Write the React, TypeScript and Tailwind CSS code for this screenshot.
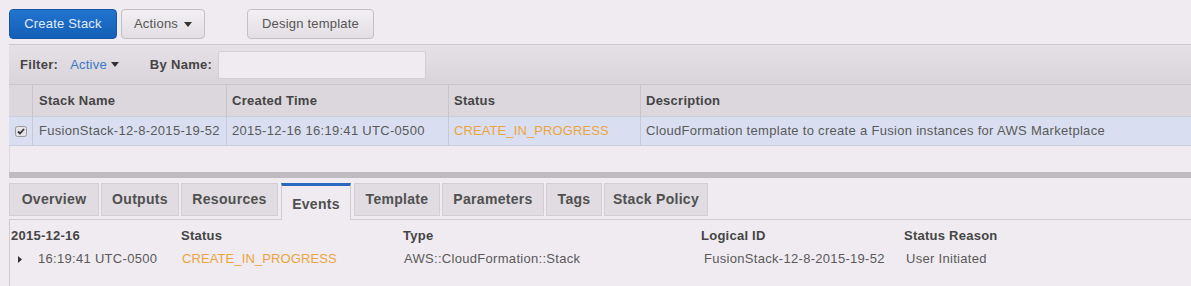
import React from "react";

const font = "font-['Liberation_Sans',Arial,Helvetica,sans-serif]";

function Caret({ className = "" }: { className?: string }) {
  return (
    <svg width="8" height="5" viewBox="0 0 8 5" className={className}>
      <path d="M0 0h8L4 5z" fill="currentColor" />
    </svg>
  );
}

const tabs = [
  { label: "Overview", w: "w-[90px]" },
  { label: "Outputs", w: "w-[78px]" },
  { label: "Resources", w: "w-[97px]" },
  { label: "Events", w: "w-[70px]", active: true },
  { label: "Template", w: "w-[86px]" },
  { label: "Parameters", w: "w-[102px]" },
  { label: "Tags", w: "w-[56px]" },
  { label: "Stack Policy", w: "w-[104px]" },
];

export default function App() {
  return (
    <div className={`h-[286px] w-[1191px] overflow-hidden bg-[#efebf0] pl-[9px] pt-[9px] ${font}`}>
      {/* toolbar */}
      <div className="flex h-[30px] items-stretch tracking-[0.2px]">
        <button className="w-[108px] rounded-[4px] border border-[#1558a8] bg-gradient-to-b from-[#2174cf] to-[#145fb7] text-[13px] text-[#e3ebf8]">
          Create Stack
        </button>
        <button className="ml-[4px] flex w-[84px] items-center justify-center gap-[6px] rounded-[4px] border border-[#c3bfc4] bg-gradient-to-b from-[#f3f0f4] to-[#e2dee3] text-[13px] text-[#555]">
          Actions <Caret className="text-[#333]" />
        </button>
        <button className="ml-[42px] w-[127px] rounded-[4px] border border-[#c3bfc4] bg-gradient-to-b from-[#f3f0f4] to-[#e2dee3] text-[13px] text-[#555]">
          Design template
        </button>
      </div>

      {/* stacks panel */}
      <div className="mt-[5px]">
        <div className="flex h-[40px] items-center border-t border-[#cbc7cc] bg-gradient-to-b from-[#e5e1e6] to-[#d8d4d9] pl-[11px] text-[13px]">
          <span className="font-bold tracking-[0.3px] text-[#444]">Filter:</span>
          <span className="ml-[12px] flex items-center gap-[4px] tracking-[0.2px] text-[#3b78c6]">
            Active <Caret className="text-[#333]" />
          </span>
          <span className="ml-[31px] font-bold tracking-[0.3px] text-[#444]">By Name:</span>
          <div className="ml-[6px] h-[28px] w-[208px] rounded-[2px] border border-[#d3cfd4] bg-[#efebf0]" />
        </div>

        <div className="flex h-[32px] items-stretch border-t border-[#c9c5ca] bg-[#dbd7dc] text-[13px] font-bold tracking-[0.25px] text-[#454545]">
          <div className="w-[24px] border-r border-[#c9c5ca]" />
          <div className="flex w-[194px] items-center border-r border-[#c9c5ca] pl-[6px]">Stack Name</div>
          <div className="flex w-[222px] items-center border-r border-[#c9c5ca] pl-[5px]">Created Time</div>
          <div className="flex w-[192px] items-center border-r border-[#c9c5ca] pl-[5px]">Status</div>
          <div className="flex flex-1 items-center pl-[5px]">Description</div>
        </div>

        <div className="flex h-[30px] items-stretch border-y border-[#cbcfdc] bg-[#d9dff0] text-[13px] tracking-[0.3px] text-[#5a5a5a]">
          <div className="flex w-[24px] items-center justify-center border-r border-[#c6cad7]">
            <svg width="12" height="11" viewBox="0 0 12 11">
              <rect x="0.5" y="0.5" width="11" height="10" rx="2" fill="#e4e2e6" stroke="#9a979c" />
              <path d="M3 5.5l2 2 4-4.5" fill="none" stroke="#333" strokeWidth="1.8" />
            </svg>
          </div>
          <div className="flex w-[194px] items-center border-r border-[#c6cad7] pl-[6px]">FusionStack-12-8-2015-19-52</div>
          <div className="flex w-[222px] items-center border-r border-[#c6cad7] pl-[5px]">2015-12-16 16:19:41 UTC-0500</div>
          <div className="flex w-[192px] items-center border-r border-[#c6cad7] pl-[5px] tracking-[0.1px] text-[#eda43f]">CREATE_IN_PROGRESS</div>
          <div className="flex flex-1 items-center pl-[5px]">
            CloudFormation template to create a Fusion instances for AWS Marketplace
          </div>
        </div>

        <div className="h-[26px] border-l border-[#dcd8dd]" />
        <div className="h-[6px] bg-[#bfbbc0]" />
      </div>

      {/* tabs */}
      <div className="mt-[5px] flex items-end gap-[2px]">
        {tabs.map((t) =>
          t.active ? (
            <div
              key={t.label}
              className={`${t.w} mx-[1px] flex h-[37px] items-center justify-center border-x border-t-[3px] border-x-[#cfcbd0] border-t-[#2a69bd] bg-[#efebf0] pt-[2px] text-[14px] font-bold tracking-[0.3px] text-[#505050]`}
            >
              {t.label}
            </div>
          ) : (
            <div
              key={t.label}
              className={`${t.w} mb-[4px] flex h-[33px] items-center justify-center border border-[#d2ced3] bg-[#e0dce1] text-[14px] font-bold tracking-[0.3px] text-[#505050]`}
            >
              {t.label}
            </div>
          )
        )}
      </div>

      {/* events */}
      <div className="-mt-[1px] h-[80px] border-l border-t border-[#cfcbd0] pt-[7px] text-[13px]">
        <div className="flex h-[18px] items-center font-bold tracking-[0.25px] text-[#454545]">
          <div className="w-[171px] pl-[1px]">2015-12-16</div>
          <div className="w-[222px]">Status</div>
          <div className="w-[298px]">Type</div>
          <div className="w-[203px]">Logical ID</div>
          <div>Status Reason</div>
        </div>
        <div className="mt-[5px] flex h-[18px] items-center tracking-[0.3px] text-[#5a5a5a]">
          <div className="flex w-[171px] items-center pl-[8px]">
            <svg width="4" height="7" viewBox="0 0 4 7" className="text-[#333]">
              <path d="M0 0l4 3.5L0 7z" fill="currentColor" />
            </svg>
            <span className="ml-[16px]">16:19:41 UTC-0500</span>
          </div>
          <div className="w-[222px] pl-[1px] tracking-[0.1px] text-[#eda43f]">CREATE_IN_PROGRESS</div>
          <div className="w-[298px] pl-[1px]">AWS::CloudFormation::Stack</div>
          <div className="w-[203px] pl-[3px]">FusionStack-12-8-2015-19-52</div>
          <div className="pl-[2px]">User Initiated</div>
        </div>
      </div>
    </div>
  );
}
